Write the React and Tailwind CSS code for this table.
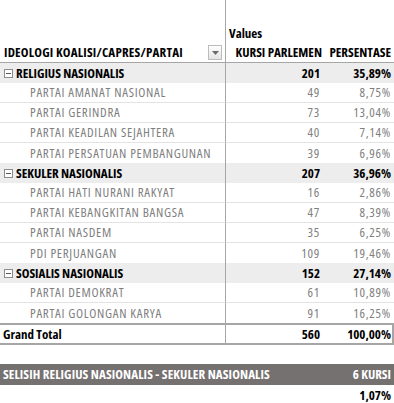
import React from "react";

const groups = [
  {
    name: "RELIGIUS NASIONALIS",
    kursi: 201,
    pct: "35,89%",
    items: [
      ["PARTAI AMANAT NASIONAL", 49, "8,75%"],
      ["PARTAI GERINDRA", 73, "13,04%"],
      ["PARTAI KEADILAN SEJAHTERA", 40, "7,14%"],
      ["PARTAI PERSATUAN PEMBANGUNAN", 39, "6,96%"],
    ],
  },
  {
    name: "SEKULER NASIONALIS",
    kursi: 207,
    pct: "36,96%",
    items: [
      ["PARTAI HATI NURANI RAKYAT", 16, "2,86%"],
      ["PARTAI KEBANGKITAN BANGSA", 47, "8,39%"],
      ["PARTAI NASDEM", 35, "6,25%"],
      ["PDI PERJUANGAN", 109, "19,46%"],
    ],
  },
  {
    name: "SOSIALIS NASIONALIS",
    kursi: 152,
    pct: "27,14%",
    items: [
      ["PARTAI DEMOKRAT", 61, "10,89%"],
      ["PARTAI GOLONGAN KARYA", 91, "16,25%"],
    ],
  },
];

function MinusBox() {
  return (
    <span className="inline-flex items-center justify-center w-[9px] h-[9px] border border-[#8c8c8c] bg-white mr-[3px] shrink-0">
      <span className="w-[5px] h-px bg-[#555]" />
    </span>
  );
}

const bold = "font-bold font-stretch-condensed";
const reg = "font-normal font-stretch-semi-condensed tracking-[0.7px]";

export default function App() {
  return (
    <div className="w-[394px] h-[403px] bg-white text-[13px] leading-none text-black overflow-hidden font-['Open_Sans',sans-serif]">
      <div className="grid grid-cols-[226px_98px_70px]">
        {/* spacer */}
        <div className="h-[23px] border-r border-[#a6a6a6]" />
        <div className="h-[23px]" />
        <div className="h-[23px]" />

        {/* Values */}
        <div className="h-[20px] border-r border-[#a6a6a6]" />
        <div className={`h-[20px] col-span-2 flex items-center pl-[3px] ${bold}`}>Values</div>

        {/* Header */}
        <div className="h-[20px] border-r border-b border-r-[#a6a6a6] border-b-[#a6a6a6] flex items-center pl-[4px] pr-[3px]">
          <span className={`flex-1 whitespace-nowrap tracking-[0.2px] ${bold}`}>IDEOLOGI KOALISI/CAPRES/PARTAI</span>
          <span className="w-[14px] h-[15px] border border-[#bcbcbc] bg-gradient-to-b from-[#ffffff] to-[#e4e4e4] flex items-center justify-center">
            <svg width="7" height="4" viewBox="0 0 7 4"><path d="M0 0h7L3.5 4z" fill="#6b6b6b" /></svg>
          </span>
        </div>
        <div className={`h-[20px] border-b border-[#a6a6a6] flex items-center justify-end pr-[2px] whitespace-nowrap ${bold}`}>KURSI PARLEMEN</div>
        <div className={`h-[20px] border-b border-[#a6a6a6] flex items-center justify-end pr-[3px] whitespace-nowrap ${bold}`}>PERSENTASE</div>

        {groups.map((g) => (
          <React.Fragment key={g.name}>
            <div className={`h-[20px] bg-[#ededed] border-r border-[#a6a6a6] flex items-center pl-[4px] whitespace-nowrap ${bold}`}>
              <MinusBox />
              {g.name}
            </div>
            <div className={`h-[20px] bg-[#ededed] flex items-center justify-end pr-[4px] ${bold}`}>{g.kursi}</div>
            <div className={`h-[20px] bg-[#ededed] flex items-center justify-end pr-[3px] ${bold}`}>{g.pct}</div>
            {g.items.map(([n, k, p], i) => {
              const last = i === g.items.length - 1;
              const b = last ? "" : "border-b border-b-[#e3e3e3]";
              return (
                <React.Fragment key={n}>
                  <div className={`h-[20px] border-r border-r-[#a6a6a6] ${b} flex items-center pl-[30px] text-[#7f7f7f] whitespace-nowrap overflow-hidden ${reg}`}>{n}</div>
                  <div className={`h-[20px] ${b} flex items-center justify-end pr-[4px] text-[#7f7f7f] ${reg}`}>{k}</div>
                  <div className={`h-[20px] ${b} flex items-center justify-end pr-[3px] text-[#7f7f7f] ${reg}`}>{p}</div>
                </React.Fragment>
              );
            })}
          </React.Fragment>
        ))}

        {/* Grand total */}
        <div className={`h-[22px] border-y-2 border-[#a6a6a6] flex items-center pl-[3px] ${bold}`}>
          <span className="flex-1">Grand Total</span>
          <span className="w-px self-stretch bg-[#a6a6a6]" />
        </div>
        <div className={`h-[22px] border-y-2 border-[#a6a6a6] flex items-center justify-end pr-[4px] ${bold}`}>560</div>
        <div className={`h-[22px] border-y-2 border-r-2 border-[#a6a6a6] flex items-center justify-end pr-[1px] ${bold}`}>100,00%</div>
      </div>

      <div className={`mt-[19px] h-[21px] bg-[#767171] text-white flex items-center justify-between pl-[3px] pr-[3px] whitespace-nowrap ${bold}`}>
        <span className="tracking-[0.1px]">SELISIH RELIGIUS NASIONALIS - SEKULER NASIONALIS</span>
        <span>6 KURSI</span>
      </div>
      <div className={`h-[20px] flex items-center justify-end pr-[3px] ${bold}`}>1,07%</div>
    </div>
  );
}
